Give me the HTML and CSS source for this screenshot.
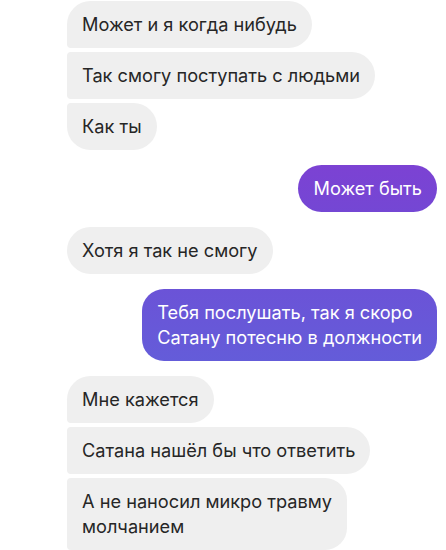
FILE: index.html
```html
<!DOCTYPE html>
<html lang="ru">
<head>
<meta charset="utf-8">
<link rel="stylesheet" href="styles.css">
</head>
<body>
<div class="chat">
  <div class="group in">
    <div class="msg first">Может и я когда нибудь</div>
    <div class="msg mid">Так смогу поступать с людьми</div>
    <div class="msg last">Как ты</div>
  </div>
  <div class="group out">
    <div class="msg sent s1">Может быть</div>
  </div>
  <div class="group in">
    <div class="msg">Хотя я так не смогу</div>
  </div>
  <div class="group out">
    <div class="msg sent s2">Тебя послушать, так я скоро<br>Сатану потесню в должности</div>
  </div>
  <div class="group in">
    <div class="msg first">Мне кажется</div>
    <div class="msg mid">Сатана нашёл бы что ответить</div>
    <div class="msg mid tall">А не наносил микро травму<br>молчанием</div>
  </div>
</div>
</body>
</html>
```

FILE: styles.css
```css
html, body {
  margin: 0;
  padding: 0;
  background: #ffffff;
}

.chat {
  display: flex;
  flex-direction: column;
  gap: 15px;
  padding: 1px 9px 0 67px;
  font-family: Inter, "Noto Sans", sans-serif;
  font-size: 18.2px;
  line-height: 25px;
  color: #262626;
}

.group {
  display: flex;
  flex-direction: column;
  gap: 4px;
}

.group.in { align-items: flex-start; }
.group.out { align-items: flex-end; }

.msg {
  background: #efefef;
  padding: 11px 15px;
  border-radius: 24px;
}

.msg.first { border-bottom-left-radius: 4px; }
.msg.mid { border-top-left-radius: 4px; border-bottom-left-radius: 4px; }
.msg.last { border-top-left-radius: 4px; }

.msg.tall {
  border-top-right-radius: 22px;
  border-bottom-right-radius: 22px;
}

.msg.sent {
  color: #ffffff;
}

.s1 {
  background: linear-gradient(180deg, #7c42d3, #7447d4);
}

.s2 {
  background: linear-gradient(180deg, #6b53d7, #645cd9);
  border-radius: 22px;
}
```
